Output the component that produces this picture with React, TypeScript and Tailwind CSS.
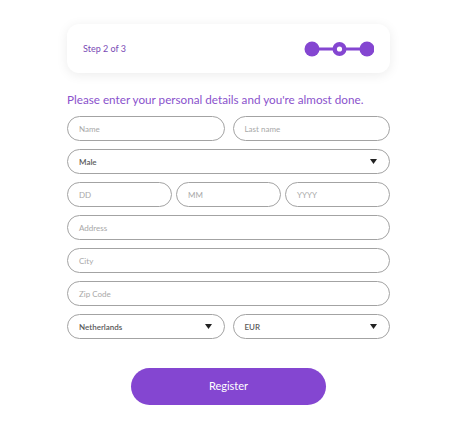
import React from "react";

const Field = ({ ph, className = "" }: { ph: string; className?: string }) => (
  <div
    className={
      "h-[25px] rounded-full border border-[#a3a3a3] flex items-center pl-[11px] text-[8px] text-[#a8a8a8] " +
      className
    }
  >
    {ph}
  </div>
);

const Select = ({ value, className = "" }: { value: string; className?: string }) => (
  <div
    className={
      "h-[25px] rounded-full border border-[#a3a3a3] flex items-center justify-between pl-[11px] pr-[12px] text-[8px] font-semibold text-[#5a5a5a] " +
      className
    }
  >
    <span>{value}</span>
    <svg width="7" height="5" viewBox="0 0 7 5">
      <path d="M0 0 L7 0 L3.5 5 Z" fill="#222" />
    </svg>
  </div>
);

export default function App() {
  return (
    <div
      className="w-[450px] h-[423px] bg-white flex flex-col pl-[67px]"
      style={{ fontFamily: "Lato, 'Noto Sans', sans-serif" }}
    >
      <div className="w-[323px] pt-[24px] flex flex-col">
        <div className="h-[49px] rounded-[12px] bg-white shadow-[0_2px_12px_rgba(0,0,0,0.08)] flex items-center justify-between pl-[16px] pr-[16px]">
          <span className="text-[9px] text-[#7a4bb5]">Step 2 of 3</span>
          <svg width="70" height="18" viewBox="0 0 70 18">
            <line x1="8" y1="9" x2="62" y2="9" stroke="#8446d1" strokeWidth="3" />
            <circle cx="8" cy="9" r="7.5" fill="#8446d1" />
            <circle cx="35.5" cy="9" r="7" fill="#8446d1" />
            <circle cx="35.5" cy="9" r="2.6" fill="#fff" />
            <circle cx="63" cy="9" r="7.5" fill="#8446d1" />
          </svg>
        </div>
        <div className="mt-[18px] text-[11.7px] text-[#8a52cc] leading-[16px]">
          Please enter your personal details and you're almost done.
        </div>
        <div className="mt-[9px] flex flex-col gap-[8px]">
          <div className="grid grid-cols-2 gap-[8px]">
            <Field ph="Name" />
            <Field ph="Last name" />
          </div>
          <Select value="Male" />
          <div className="grid grid-cols-3 gap-[4px]">
            <Field ph="DD" />
            <Field ph="MM" />
            <Field ph="YYYY" />
          </div>
          <Field ph="Address" />
          <Field ph="City" />
          <Field ph="Zip Code" />
          <div className="grid grid-cols-2 gap-[8px]">
            <Select value="Netherlands" />
            <Select value="EUR" />
          </div>
        </div>
        <div className="mt-[29px] flex justify-center">
          <div className="w-[195px] h-[37px] rounded-full bg-[#8446d1] flex items-center justify-center text-white text-[11px]">
            Register
          </div>
        </div>
      </div>
    </div>
  );
}
